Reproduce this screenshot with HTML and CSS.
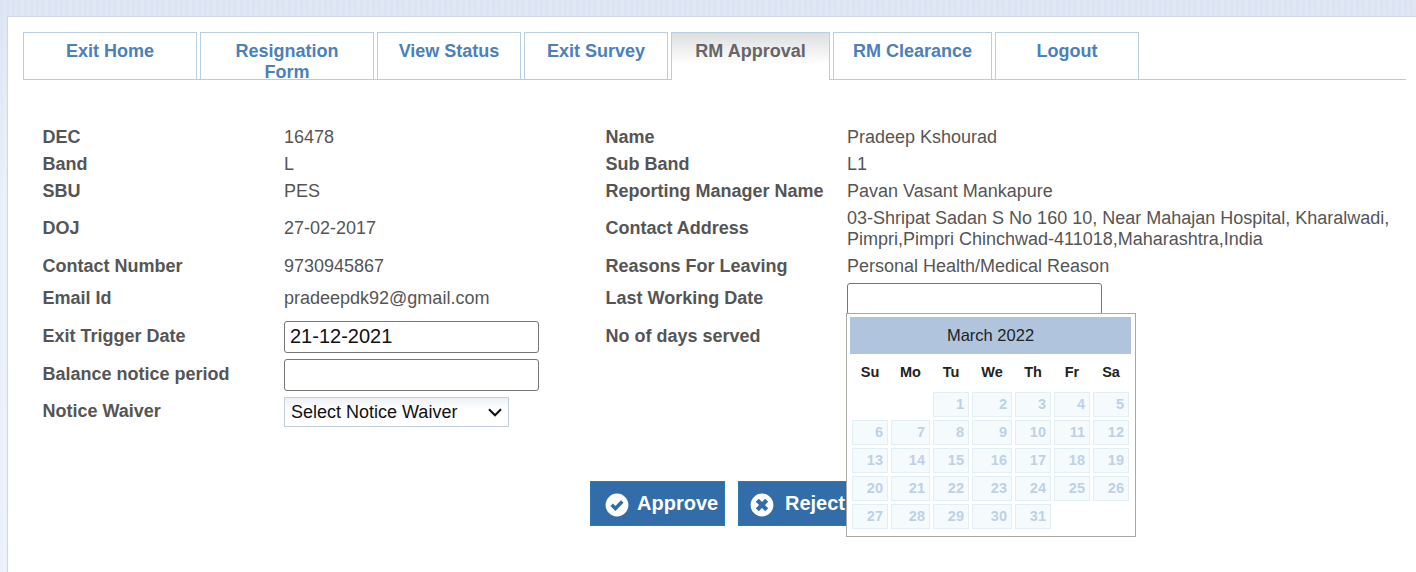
FILE: index.html
```html
<!DOCTYPE html>
<html lang="en">
<head>
<meta charset="utf-8">
<title>RM Approval</title>
<link rel="stylesheet" href="styles.css">
</head>
<body>
<main class="panel">
  <nav class="tabs">
    <a class="tab tab-lg">Exit Home</a>
    <a class="tab tab-lg">Resignation Form</a>
    <a class="tab">View Status</a>
    <a class="tab">Exit Survey</a>
    <a class="tab tab-md active">RM Approval</a>
    <a class="tab tab-md">RM Clearance</a>
    <a class="tab">Logout</a>
  </nav>
  <form class="details">
    <label>DEC</label><span>16478</span><label>Name</label><span>Pradeep Kshourad</span>
    <label>Band</label><span>L</span><label>Sub Band</label><span>L1</span>
    <label>SBU</label><span>PES</span><label>Reporting Manager Name</label><span>Pavan Vasant Mankapure</span>
    <label>DOJ</label><span>27-02-2017</span><label>Contact Address</label><span>03-Shripat Sadan S No 160 10, Near Mahajan Hospital, Kharalwadi,<br>Pimpri,Pimpri Chinchwad-411018,Maharashtra,India</span>
    <label>Contact Number</label><span>9730945867</span><label>Reasons For Leaving</label><span>Personal Health/Medical Reason</span>
    <label>Email Id</label><span>pradeepdk92@gmail.com</span><label>Last Working Date</label>
    <div class="date-field">
      <input class="field" type="text">
      <div class="calendar">
        <div class="cal-title">March 2022</div>
        <div class="cal-grid cal-head"><b>Su</b><b>Mo</b><b>Tu</b><b>We</b><b>Th</b><b>Fr</b><b>Sa</b></div>
        <div class="cal-grid cal-days">
          <i class="first">1</i><i>2</i><i>3</i><i>4</i><i>5</i>
          <i>6</i><i>7</i><i>8</i><i>9</i><i>10</i><i>11</i><i>12</i>
          <i>13</i><i>14</i><i>15</i><i>16</i><i>17</i><i>18</i><i>19</i>
          <i>20</i><i>21</i><i>22</i><i>23</i><i>24</i><i>25</i><i>26</i>
          <i>27</i><i>28</i><i>29</i><i>30</i><i>31</i>
        </div>
      </div>
    </div>
    <label>Exit Trigger Date</label><div><input class="field" type="text" value="21-12-2021"></div><label>No of days served</label><span></span>
    <label>Balance notice period</label><div><input class="field" type="text"></div><span></span><span></span>
    <label>Notice Waiver</label>
    <div class="select">Select Notice Waiver
      <svg width="14" height="9" viewBox="0 0 14 9"><path d="M1 1.2l6 6 6-6" fill="none" stroke="#111" stroke-width="2.1"/></svg>
    </div>
  </form>
  <div class="actions">
    <button class="btn" type="button">
      <svg width="24" height="24" viewBox="0 0 24 24"><circle cx="12" cy="12" r="11.4" fill="#fff"/><path d="M6.7 11.8l3.7 3.7 6.9-7" fill="none" stroke="#326ca9" stroke-width="3.5"/></svg>Approve
    </button>
    <button class="btn" type="button">
      <svg width="24" height="24" viewBox="0 0 24 24"><circle cx="12" cy="12" r="11.4" fill="#fff"/><path d="M7.3 7.3l9.4 9.4M16.7 7.3l-9.4 9.4" fill="none" stroke="#326ca9" stroke-width="4.2"/></svg>Reject
    </button>
  </div>
</main>
</body>
</html>
```
FILE: styles.css
```css
* { box-sizing: border-box; }

body {
  margin: 0;
  height: 572px;
  padding: 16px 0 0 7px;
  overflow: hidden;
  background:
    repeating-linear-gradient(90deg, rgba(255,255,255,0) 0 3px, rgba(255,255,255,.13) 3px 6px),
    linear-gradient(#dce3f2, #e9eff9 190px, #ebf0fa);
  font: 18px/21px "Liberation Sans", Arial, sans-serif;
  color: #555;
}

.panel {
  height: 556px;
  border: solid #cdd9ea;
  border-width: 1px 0 0 1px;
  background: #fff;
  padding: 15px 10px 0 15px;
}

.tabs {
  display: flex;
  gap: 3px;
  height: 48px;
  border-bottom: 1px solid #b5cede;
}

.tab {
  width: 144px;
  height: 47px;
  padding: 8px 20px 0;
  border: 1px solid #b9cfdf;
  border-bottom: 0;
  text-align: center;
  font-weight: bold;
  color: #4b80bb;
}
.tab:not(.tab-lg) { padding-inline: 0; }
.tab-lg { width: 174px; }
.tab-md { width: 159px; }
.tab.active {
  height: 48px;
  color: #666;
  background: linear-gradient(#dddedf, #fff 31px);
}

.details {
  display: grid;
  grid-template-columns: 241.5px 321.5px 241.5px 1fr;
  grid-template-rows: 27px 27px 27px 48.75px 26px 38px 38px 38px 36px;
  align-items: center;
  margin: 43.5px 0 0 19.5px;
}
.details label { font-weight: bold; }
.details span { white-space: nowrap; }

.field {
  display: block;
  width: 255px;
  height: 32px;
  margin-top: 2px;
  padding: 0 5px 2px;
  border: 1px solid #767676;
  border-radius: 3px;
  background: #fff;
  font: 20px "Liberation Sans", Arial, sans-serif;
  color: #111;
}

.select {
  display: flex;
  align-items: center;
  justify-content: space-between;
  width: 225px;
  height: 30px;
  margin-top: 2px;
  padding: 0 6px;
  border: 1px solid #c2cedb;
  background: linear-gradient(#edf1f6, #fff 12px);
  color: #111;
}

.date-field { position: relative; }
.calendar {
  position: absolute;
  z-index: 2;
  top: 32px;
  left: -1px;
  width: 290px;
  height: 224px;
  padding: 3px;
  border: 1px solid #a9a9a4;
  background: #fff;
}
.cal-title {
  width: 281px;
  height: 37px;
  background: #b0c4de;
  text-align: center;
  font-size: 16.5px;
  line-height: 37px;
  color: #222;
}
.cal-grid {
  display: grid;
  grid-template-columns: 36px 39px 36px 40px 36px 36px 36px;
  column-gap: 3px;
  margin-left: 2px;
  font-size: 14.5px;
}
.cal-head {
  height: 38px;
  line-height: 37px;
  text-align: center;
  color: #222;
}
.cal-days { grid-auto-rows: 25px; row-gap: 3px; }
.cal-days i {
  padding-right: 4px;
  border: 1px solid #e3edf4;
  background: #f5fafd;
  font-style: normal;
  font-weight: bold;
  line-height: 22px;
  text-align: right;
  color: #bdd1e5;
}
.cal-days .first { grid-column-start: 3; }

.actions {
  display: flex;
  gap: 13px;
  margin: 51.75px 0 0 567px;
}
.btn {
  display: flex;
  align-items: center;
  gap: 8px;
  width: 135px;
  height: 45px;
  padding: 0 0 0 14px;
  border: 1px solid #2b7ab5;
  background: #326ca9;
  font: bold 20px "Liberation Sans", Arial, sans-serif;
  color: #fff;
}
.btn + .btn { padding-left: 11px; gap: 11px; }
.btn svg { margin-top: 3px; }
```
